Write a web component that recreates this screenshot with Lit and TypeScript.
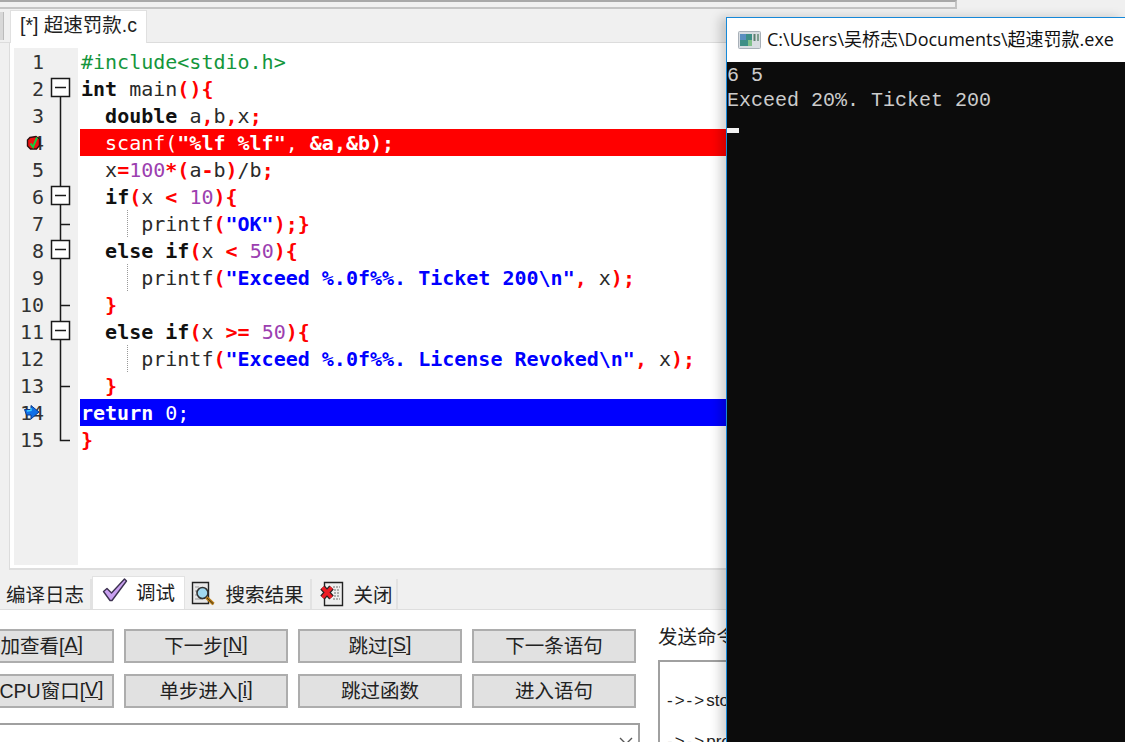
import { LitElement, html, css, svg } from "lit";
import { customElement } from "lit/decorators.js";

type Tok = [string, string];
const P = "p", K = "k", S = "s", N = "n", Q = "q", G = "g";

const lines: { t: Tok[]; cls?: string; guide?: boolean; fold: string; mark?: string }[] = [
  { t: [[G, "#include<stdio.h>"]], fold: "" },
  { t: [[K, "int"], [P, " main"], [S, "(){"]], fold: "box-first" },
  { t: [[P, "  "], [K, "double"], [P, " a"], [S, ","], [P, "b"], [S, ","], [P, "x"], [S, ";"]], fold: "line" },
  { t: [[P, "  scanf("], [K, '"%lf %lf"'], [P, ", "], [K, "&a,&b);"]], cls: "red", fold: "line", mark: "bp" },
  { t: [[P, "  x"], [S, "="], [N, "100"], [S, "*("], [P, "a"], [S, "-"], [P, "b"], [S, ")"], [P, "/b"], [S, ";"]], fold: "line" },
  { t: [[P, "  "], [K, "if"], [S, "("], [P, "x "], [S, "<"], [P, " "], [N, "10"], [S, "){"]], fold: "box" },
  { t: [[P, "     printf"], [S, "("], [Q, '"OK"'], [S, ");}"]], fold: "tick", guide: true },
  { t: [[P, "  "], [K, "else if"], [S, "("], [P, "x "], [S, "<"], [P, " "], [N, "50"], [S, "){"]], fold: "box" },
  { t: [[P, "     printf"], [S, "("], [Q, '"Exceed %.0f%%. Ticket 200\\n"'], [S, ","], [P, " x"], [S, ");"]], fold: "line", guide: true },
  { t: [[P, "  "], [S, "}"]], fold: "tick" },
  { t: [[P, "  "], [K, "else if"], [S, "("], [P, "x "], [S, ">="], [P, " "], [N, "50"], [S, "){"]], fold: "box" },
  { t: [[P, "     printf"], [S, "("], [Q, '"Exceed %.0f%%. License Revoked\\n"'], [S, ","], [P, " x"], [S, ");"]], fold: "line", guide: true },
  { t: [[P, "  "], [S, "}"]], fold: "tick" },
  { t: [[K, "return"], [P, " 0;"]], cls: "blue", fold: "line", mark: "arrow" },
  { t: [[S, "}"]], fold: "end" },
];

function foldSvg(kind: string) {
  if (!kind) return html`<svg class="fold" width="22" height="27"></svg>`;
  const box = kind.startsWith("box");
  return html`<svg class="fold" width="22" height="27" viewBox="0 0 22 27" stroke="#1a1a1a" stroke-width="1.5" fill="none">
    ${kind === "box-first" ? svg`<path d="M10.5 20V27"/>` : ""}
    ${kind === "box" || kind === "line" ? svg`<path d="M10.5 0V27"/>` : ""}
    ${kind === "tick" ? svg`<path d="M10.5 0V27M10.5 14.5H20"/>` : ""}
    ${kind === "end" ? svg`<path d="M10.5 0V14.5H20"/>` : ""}
    ${box
      ? svg`<rect x="1.5" y="3.5" width="18" height="18" fill="#fff"/><path d="M5 12.5H16"/>`
      : ""}
  </svg>`;
}

const bpIcon = html`<svg class="mark bp" width="18" height="18" viewBox="0 0 18 18">
  <path d="M5 3.5L11 2.5L14.5 5V11.5L11.5 15H5.5L2.5 12V6Z" fill="#f01010" stroke="#301010" stroke-width="1.4"/>
  <path d="M5.5 9.5L8 13L12 3.5" fill="none" stroke="#10d040" stroke-width="2"/>
</svg>`;
const arrowIcon = html`<svg class="mark" width="18" height="18" viewBox="0 0 18 18">
  <path d="M1.5 5.5H8V1.5L16 8L8 15V11H3.5Z" fill="#1070e8" stroke="#0a3a90" stroke-width="1"/>
  <path d="M4 7L8 6.5V4" fill="none" stroke="#40d0ff" stroke-width="1.4"/>
</svg>`;

const checkIcon = html`<svg width="26" height="26" viewBox="0 0 26 26">
  <path d="M1.5 14.5L5 11.5L9.5 16L22.5 2L24.5 4L10 23.5H8Z" fill="#c9a0f0" stroke="#3c3150" stroke-width="1.4" stroke-linejoin="round"/>
</svg>`;
const searchIcon = html`<svg width="26" height="26" viewBox="0 0 26 26">
  <path d="M1.5 1.5H17.5V22.5H1.5Z" fill="#e8e8e8" stroke="#222" stroke-width="1.4"/>
  <path d="M4 6H8M4 10H6M4 14H6M4 18H12" stroke="#999" stroke-width="1" fill="none"/>
  <circle cx="11.5" cy="12" r="5.5" fill="#a0d8f0" stroke="#333" stroke-width="1.6"/>
  <path d="M15.5 16.5L22.5 23" stroke="#b87a10" stroke-width="3.2" fill="none"/>
  <path d="M16 17L22.5 23" stroke="#222" stroke-width="0.8" fill="none"/>
</svg>`;
const closeIcon = html`<svg width="26" height="26" viewBox="0 0 26 26">
  <path d="M5.5 1.5H23.5V24.5H5.5Z" fill="#eee" stroke="#222" stroke-width="1.4"/>
  <path d="M14 6H21M15 9H21M15 12H21M15 15H21M14 18H21" stroke="#999" stroke-width="1.4" stroke-dasharray="2 1" fill="none"/>
  <path d="M3.5 6.5L12.5 16.5M12.5 6.5L3.5 16.5" stroke="#222" stroke-width="6" fill="none"/>
  <path d="M3.5 6.5L12.5 16.5M12.5 6.5L3.5 16.5" stroke="#ec1c24" stroke-width="3.6" fill="none"/>
</svg>`;
const consoleIcon = html`<svg width="23" height="18" viewBox="0 0 23 18">
  <rect x="0.5" y="0.5" width="22" height="17" rx="1" fill="#d8dde2" stroke="#a8b0b8"/>
  <rect x="2" y="3" width="12" height="12" fill="#3d8f86"/>
  <rect x="2" y="3" width="6" height="6" fill="#5a8fc0"/>
  <rect x="10" y="9" width="4" height="6" fill="#7fc08a"/>
  <rect x="15.5" y="3" width="2" height="7" fill="#5c7f70"/>
  <rect x="19" y="3" width="2" height="7" fill="#7fa090"/>
</svg>`;

@customElement("app-root")
export class AppRoot extends LitElement {
  static styles = css`
    :host {
      display: block;
      position: relative;
      width: 1125px;
      height: 742px;
      overflow: hidden;
      background: #f0f0f0;
      font-family: "Liberation Sans", "Noto Sans CJK SC", sans-serif;
      font-size: 19.5px;
      color: #222;
    }
    .page { display: flex; flex-direction: column; height: 742px; }
    .topbar {
      height: 9px;
      width: 957px;
      box-sizing: border-box;
      border-top: 2px solid #a8a8a8;
      border-bottom: 2px solid #c4c4c4;
      border-right: 2px solid #c4c4c4;
      flex: none;
    }
    .tabrow { height: 34px; display: flex; flex: none; padding-top: 1px; box-sizing: border-box; border-bottom: 1px solid #dcdcdc; }
    .stub { width: 3px; height: 28px; margin-top: 2px; background: #d8d8d8; border-right: 1px solid #bbb; margin-right: 6px; }
    .filetab {
      width: 137px;
      background: #fff;
      border: 1px solid #e0e0e0;
      border-bottom: none;
      box-sizing: border-box;
      padding-left: 9px;
      line-height: 28px;
      white-space: pre;
      height: 33px;
      z-index: 1;
    }
    .editor {
      margin-left: 9px;
      height: 527px;
      box-sizing: border-box;
      flex: none;
      background: #fff;
      border-left: 1px solid #dcdcdc;
      border-bottom: 2px solid #dedede;
      padding: 5px 0 0 4px;
    }
    .editor-inner { height: 517px; background: linear-gradient(to right, #f0f0f0 64px, #fff 64px); }
    .row { display: flex; height: 27px; }
    .num {
      position: relative;
      width: 30px;
      height: 27px;
      box-sizing: border-box;
      padding-top: 1px;
      text-align: right;
      font: 20px/27px "DejaVu Sans Mono", monospace;
      color: #333;
      flex: none;
    }
    .mark { position: absolute; left: 9px; top: 5px; }
    .mark.bp { left: 11px; }
    .fold { margin-left: 6px; flex: none; display: block; }
    .code {
      position: relative;
      margin-left: 8px;
      flex: 1;
      height: 27px;
      box-sizing: border-box;
      padding: 1px 0 0 1px;
      font: 20px/27px "DejaVu Sans Mono", monospace;
      white-space: nowrap;
      color: #2a2a2a;
    }
    .code span { white-space: pre; }
    .guide { position: absolute; left: 47px; top: 0; height: 27px; border-left: 1px dotted #999; }
    .p { font-weight: 400; }
    .k { font-weight: 700; color: #111; }
    .s { font-weight: 700; color: #ff0000; }
    .n { color: #9c3fb0; }
    .q { font-weight: 700; color: #0000ff; }
    .g { color: #14963c; }
    .red { background: #ff0000; }
    .blue { background: #0000ff; }
    .red span, .blue span { color: #fff; }

    .btabs {
      height: 40px;
      flex: none;
      display: flex;
      align-items: flex-end;
      box-sizing: border-box;
      border-bottom: 1px solid #dedede;
    }
    .btab {
      height: 30px;
      box-sizing: border-box;
      border-right: 2px solid #e2e2e2;
      display: flex;
      align-items: center;
      gap: 8px;
      white-space: pre;
      justify-content: center;
      padding-bottom: 1px;
    }
    .btab.last { padding-left: 4px; }
    .btab.on { height: 33px; background: #fff; border: 1px solid #e2e2e2; border-bottom: none; align-items: flex-start; padding: 0; }
    .lower { flex: 1; background: #fff; display: flex; min-height: 0; }
    .left { width: 640px; flex: none; padding-top: 19px; overflow: hidden; }
    .grid {
      display: grid;
      grid-template-columns: repeat(4, 164px);
      grid-auto-rows: 34px;
      gap: 11px 10px;
      margin-left: -50px;
    }
    .btn {
      background: #e1e1e1;
      border: 2px solid #adadad;
      box-sizing: border-box;
      display: flex;
      align-items: center;
      justify-content: center;
      color: #222;
      white-space: pre;
      padding-bottom: 3px;
    }
    .combo {
      margin-top: 15px;
      height: 30px;
      border-top: 2px solid #a0a0a0;
      display: flex;
      justify-content: flex-end;
      padding: 12px 5px 0 0;
      box-sizing: border-box;
      border-right: 2px solid #a0a0a0;
    }
    .right { margin-left: 18px; padding-top: 15px; }
    .label { line-height: 25px; white-space: pre; }
    .cmd {
      margin-top: 10px;
      width: 300px;
      height: 100px;
      border: 2px solid #a0a0a0;
      box-sizing: border-box;
      padding: 18px 0 0 7px;
      font-size: 17px;
      line-height: 41px;
      white-space: pre;
    }
    .cmd b { font-weight: 400; letter-spacing: 2px; }

    .window {
      position: absolute;
      left: 726px;
      top: 17px;
      width: 399px;
      height: 725px;
      box-sizing: border-box;
      border: 1px solid #1688d8;
      border-width: 1px 0 0 1px;
      box-shadow: -6px 0 10px rgba(0, 0, 0, 0.18);
      display: flex;
      flex-direction: column;
      background: #0c0c0c;
    }
    .title {
      height: 44px;
      flex: none;
      background: #fff;
      display: flex;
      align-items: center;
      padding-left: 11px;
      gap: 6px;
      font-family: "Open Sans", "Noto Sans CJK SC", sans-serif;
      font-size: 18px;
      color: #111;
      white-space: pre;
    }
    .title span { margin-top: -4px; }
    .con {
      font: 20px/25px "Liberation Mono", monospace;
      color: #cccccc;
      white-space: pre;
      padding-top: 1px;
    }
    .cursor { width: 12px; height: 5px; background: #f2f2f2; margin-top: 15px; }
  `;

  render() {
    return html`
      <div class="page">
        <div class="topbar"></div>
        <div class="tabrow">
          <div class="stub"></div>
          <div class="filetab">[*] 超速罚款.c</div>
        </div>
        <div class="editor">
          <div class="editor-inner">
            ${lines.map(
              (l, i) => html`<div class="row">
                <div class="num">${i + 1}${l.mark === "bp" ? bpIcon : l.mark === "arrow" ? arrowIcon : ""}</div>
                ${foldSvg(l.fold)}
                <div class="code ${l.cls ?? ""}">
                  ${l.guide ? html`<i class="guide"></i>` : ""}${l.t.map(([c, s]) => html`<span class=${c}>${s}</span>`)}
                </div>
              </div>`
            )}
          </div>
        </div>
        <div class="btabs">
          <div class="btab" style="width:92px">编译日志</div>
          <div class="btab on" style="width:93px">${checkIcon}<span>调试</span></div>
          <div class="btab" style="width:127px">${searchIcon}<span>搜索结果</span></div>
          <div class="btab last" style="width:86px">${closeIcon}<span>关闭</span></div>
        </div>
        <div class="lower">
          <div class="left">
            <div class="grid">
              <div class="btn">添加查看[<u>A</u>]</div>
              <div class="btn">下一步[<u>N</u>]</div>
              <div class="btn">跳过[<u>S</u>]</div>
              <div class="btn">下一条语句</div>
              <div class="btn">查看CPU窗口[<u>V</u>]</div>
              <div class="btn">单步进入[<u>i</u>]</div>
              <div class="btn">跳过函数</div>
              <div class="btn">进入语句</div>
            </div>
            <div class="combo">
              <svg width="14" height="8" viewBox="0 0 14 8"><path d="M1 1L7 7L13 1" fill="none" stroke="#555" stroke-width="1.4"/></svg>
            </div>
          </div>
          <div class="right">
            <div class="label">发送命令到GDB：</div>
            <div class="cmd"><b>-&gt;-&gt;</b>stopped
<b>-&gt;-&gt;</b>pre-prompt</div>
          </div>
        </div>
      </div>
      <div class="window">
        <div class="title">${consoleIcon}<span>C:\\Users\\吴桥志\\Documents\\超速罚款.exe</span></div>
        <div class="con">6 5
Exceed 20%. Ticket 200</div>
        <div class="cursor"></div>
      </div>
    `;
  }
}
